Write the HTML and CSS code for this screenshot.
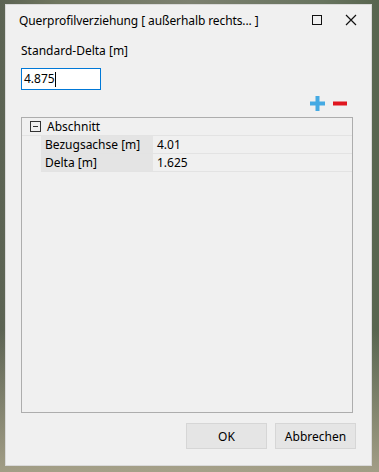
FILE: index.html
```html
<!DOCTYPE html>
<html lang="de">
<head>
  <meta charset="UTF-8" />
  <title>Querprofilverziehung</title>
  <link rel="stylesheet" href="styles.css">
</head>
<body>
  <div class="window">
    <div class="titlebar">
      <span class="title">Querprofilverziehung [ außerhalb rechts... ]</span>
      <span class="tb-btn">
        <svg width="12" height="12" viewBox="0 0 12 12"><rect x="1.5" y="1.5" width="9" height="9" fill="none" stroke="#111" stroke-width="1"/></svg>
      </span>
      <span class="tb-btn">
        <svg width="12" height="12" viewBox="0 0 12 12"><path d="M1 1 L11 11 M11 1 L1 11" stroke="#111" stroke-width="1.2"/></svg>
      </span>
    </div>
    <div class="content">
      <label class="field-label">Standard-Delta [m]</label>
      <div class="input">4.875<span class="caret"></span></div>
      <div class="tools">
        <svg width="17" height="17" viewBox="0 0 17 17"><path d="M8.5 1 V16 M1 8.5 H16" stroke="#45aae3" stroke-width="4"/></svg>
        <svg width="16" height="17" viewBox="0 0 16 17"><path d="M1 8.5 H15" stroke="#e0161f" stroke-width="4"/></svg>
      </div>
      <div class="grid">
        <div class="group-row">
          <span class="expander"></span>
          <span>Abschnitt</span>
        </div>
        <div class="prop-row">
          <span class="prop-name">Bezugsachse [m]</span>
          <span class="prop-value">4.01</span>
        </div>
        <div class="prop-row">
          <span class="prop-name">Delta [m]</span>
          <span class="prop-value">1.625</span>
        </div>
      </div>
      <div class="buttons">
        <button>OK</button>
        <button>Abbrechen</button>
      </div>
    </div>
  </div>
</body>
</html>
```

FILE: styles.css
```css
html, body { margin: 0; height: 100%; }
body {
  font-family: "Noto Sans", "Open Sans", sans-serif;
  font-size: 12px;
  color: #000;
  background:
    linear-gradient(180deg, rgba(0,0,0,0) 70%, rgba(170,164,140,0.9) 100%),
    linear-gradient(90deg, #5c6353 0%, #6f765f 15%, #7c8070 50%, #68745f 85%, #58654f 100%);
  overflow: hidden;
}
.window {
  margin: 4px 0 0 5px;
  width: 365px;
  height: 460px;
  background: #f0f0f0;
  border: 1px solid #d9d9d9;
  display: flex;
  flex-direction: column;
}
.titlebar { display: flex; align-items: center; height: 30px; padding-left: 13px; }
.title { flex: 1; letter-spacing: -0.1px; }
.tb-btn { width: 34px; display: flex; justify-content: center; }
.tb-btn:last-child { margin-right: 3px; }
.content { flex: 1; display: flex; flex-direction: column; padding: 7px 17px 16px 15px; }
.field-label { display: block; height: 18px; }
.input {
  width: 76px;
  height: 20px;
  margin-top: 8px;
  border: 1px solid #0078d7;
  background: #fff;
  padding-left: 2px;
  line-height: 20px;
  display: flex;
  align-items: center;
}
.caret { display: inline-block; width: 1px; height: 15px; background: #000; }
.tools { display: flex; justify-content: flex-end; gap: 6px; height: 27px; align-items: center; padding-right: 6px; }
.grid {
  flex: 1;
  border: 1px solid #adadad;
  background: #f0f0f0;
  margin-right: 1px;
}
.group-row { display: flex; align-items: center; height: 17px; border-bottom: 1px solid #e3e3e3; }
.expander {
  width: 9px; height: 9px; border: 1px solid #333; margin: 0 6px 0 8px; position: relative;
}
.expander::after { content: ""; position: absolute; left: 2px; right: 2px; top: 4px; height: 1px; background: #333; }
.prop-row { display: flex; height: 17px; border-bottom: 1px solid #e3e3e3; margin-left: 19px; }
.prop-name { width: 108px; padding-left: 4px; background: #e4e4e4; line-height: 17px; }
.prop-value { flex: 1; padding-left: 4px; line-height: 17px; }
.buttons { display: flex; justify-content: flex-end; gap: 8px; margin-top: 10px; margin-right: -2px; }
button {
  width: 81px; height: 26px;
  font: inherit;
  background: #e5e5e5;
  border: 1px solid #d6d6d6;
  padding: 0;
}
```
